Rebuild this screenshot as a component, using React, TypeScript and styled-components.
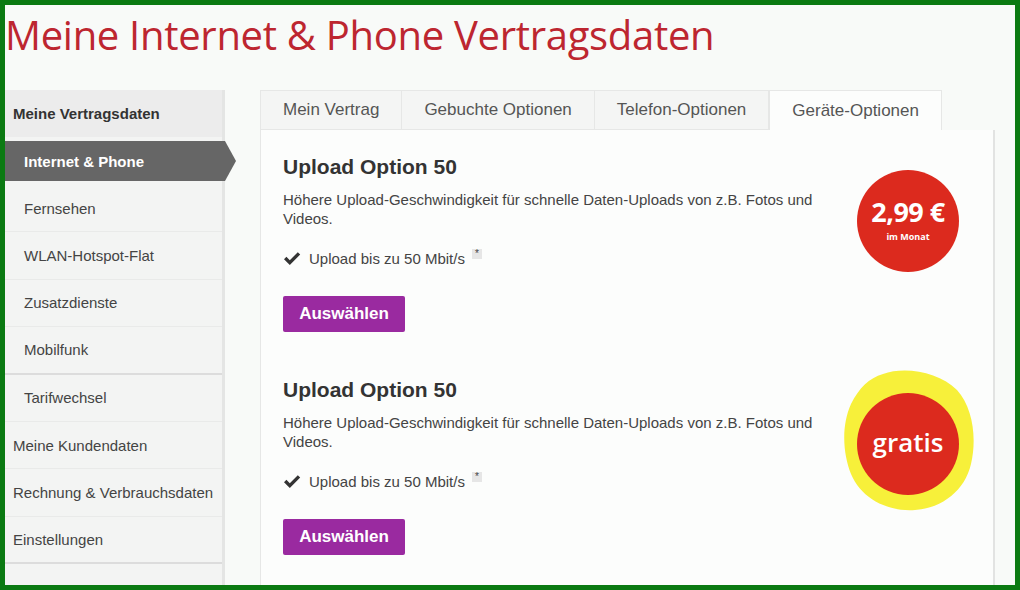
import React from 'react'
import styled, { createGlobalStyle } from 'styled-components'

const GlobalStyle = createGlobalStyle`
  html, body {
    margin: 0;
    padding: 0;
    background: #0b7a12;
  }
  * {
    box-sizing: border-box;
  }
`

const Frame = styled.div`
  width: 1020px;
  height: 590px;
  border: 5px solid #0b7a12;
  background: #f8faf8;
  font-family: 'Liberation Sans', Arial, sans-serif;
  color: #444;
  overflow: hidden;
`

const Title = styled.h1`
  margin: 0;
  height: 85px;
  padding: 5px 0 0 0;
  font-family: 'Open Sans', 'Noto Sans', sans-serif;
  font-weight: 400;
  font-size: 40px;
  line-height: 50px;
  letter-spacing: -0.3px;
  color: #bd2630;
  white-space: nowrap;
`

const Body = styled.div`
  display: flex;
  gap: 35px;
  height: 495px;
`

const Sidebar = styled.nav`
  width: 220px;
  flex: none;
  display: flex;
  flex-direction: column;
  background: #f3f4f3;
  border-right: 3px solid #e4e5e4;
`

const SideHeader = styled.div`
  height: 47px;
  display: flex;
  align-items: center;
  padding-left: 8px;
  background: #ececec;
  font-weight: 700;
  font-size: 15px;
  color: #333;
  margin-bottom: 4px;
`

const SideItem = styled.div<{ $sub?: boolean; $active?: boolean; $strong?: boolean }>`
  height: ${({ $active }) => ($active ? '40px' : '47.4px')};
  flex: none;
  display: flex;
  align-items: center;
  padding-left: ${({ $sub }) => ($sub ? '19px' : '8px')};
  font-size: 15px;
  color: #444;
  white-space: nowrap;
  border-bottom: ${({ $strong }) => ($strong ? '2px solid #dcdcdc' : '1px solid #e9eae9')};
  ${({ $active }) =>
    $active &&
    `
    width: calc(100% + 14px);
    background: #666666;
    color: #ffffff;
    font-weight: 700;
    border-bottom: none;
    clip-path: polygon(0 0, calc(100% - 11px) 0, 100% 50%, calc(100% - 11px) 100%, 0 100%);
    margin-bottom: 4px;
  `}
`

const Main = styled.div`
  width: 735px;
  display: flex;
  flex-direction: column;
`

const Tabs = styled.div`
  display: flex;
  height: 40px;
`

const Tab = styled.div<{ $active?: boolean }>`
  padding: 0 22px;
  display: flex;
  align-items: center;
  font-size: 17px;
  color: #555;
  background: ${({ $active }) => ($active ? '#fcfdfc' : '#f4f5f4')};
  border: 1px solid #e6e7e6;
  border-left: ${({ $active }) => ($active ? '1px solid #e6e7e6' : 'none')};
  border-bottom: ${({ $active }) => ($active ? 'none' : '1px solid #e6e7e6')};
  &:first-child {
    border-left: 1px solid #e6e7e6;
  }
`

const Panel = styled.div`
  flex: 1;
  background: #fcfdfc;
  border-left: 1px solid #e6e7e6;
  border-right: 2px solid #e2e3e2;
  display: flex;
  flex-direction: column;
`

const Option = styled.section`
  display: flex;
  height: 223px;
  padding: 25px 34px 20px 22px;
`

const OptionText = styled.div`
  flex: 1;
`

const OptionTitle = styled.h2`
  margin: 0;
  font-size: 21px;
  line-height: 24px;
  font-weight: 700;
  color: #333;
`

const Desc = styled.p`
  margin: 11px 0 0 0;
  width: 540px;
  font-size: 15px;
  line-height: 19px;
  color: #444;
`

const Feature = styled.div`
  margin-top: 20px;
  display: flex;
  align-items: center;
  gap: 8px;
  height: 20px;
  font-size: 15px;
  color: #444;
`

const Note = styled.span`
  display: inline-flex;
  align-items: center;
  justify-content: center;
  width: 10px;
  height: 10px;
  margin-left: -1px;
  margin-top: -8px;
  background: #e6e6e6;
  font-size: 10px;
  line-height: 10px;
  color: #444;
`

const Button = styled.button`
  margin-top: 28px;
  width: 122px;
  height: 36px;
  border: none;
  border-radius: 2px;
  background: #9a2aa0;
  color: #fff;
  font-family: 'Liberation Sans', Arial, sans-serif;
  font-weight: 700;
  font-size: 17px;
  cursor: pointer;
`

const BadgeSlot = styled.div`
  position: relative;
  flex: none;
  width: 102px;
  margin-top: 15px;
`

const Badge = styled.div`
  position: relative;
  width: 102px;
  height: 102px;
  border-radius: 50%;
  background: #dc2a1e;
  color: #fff;
  display: flex;
  flex-direction: column;
  align-items: center;
  justify-content: center;
  gap: 3px;
  font-family: 'Open Sans', 'Noto Sans', sans-serif;
  font-weight: 700;
`

const Price = styled.div`
  font-size: 27px;
  line-height: 32px;
  letter-spacing: -0.5px;
  margin-top: -4px;
`

const PerMonth = styled.div`
  font-size: 9px;
  line-height: 11px;
`

const Gratis = styled.div`
  font-size: 26px;
  line-height: 30px;
  font-weight: 600;
  margin-top: -4px;
`

const Highlight = styled.svg`
  position: absolute;
  left: -14px;
  top: -25px;
  width: 134px;
  height: 144px;
`

const CheckIcon = () => (
  <svg width="18" height="15" viewBox="0 0 18 15">
    <path d="M1 8.2 L3.4 5.8 L6.8 9.2 L14.8 1.2 L17.2 3.6 L6.8 14 Z" fill="#333" />
  </svg>
)

type OptionData = {
  title: string
  desc: string
  feature: string
  badge: 'price' | 'gratis'
}

const options: OptionData[] = [
  {
    title: 'Upload Option 50',
    desc: 'Höhere Upload-Geschwindigkeit für schnelle Daten-Uploads von z.B. Fotos und Videos.',
    feature: 'Upload bis zu 50 Mbit/s',
    badge: 'price',
  },
  {
    title: 'Upload Option 50',
    desc: 'Höhere Upload-Geschwindigkeit für schnelle Daten-Uploads von z.B. Fotos und Videos.',
    feature: 'Upload bis zu 50 Mbit/s',
    badge: 'gratis',
  },
]

const subItems = ['Fernsehen', 'WLAN-Hotspot-Flat', 'Zusatzdienste', 'Mobilfunk', 'Tarifwechsel']
const topItems = ['Meine Kundendaten', 'Rechnung & Verbrauchsdaten', 'Einstellungen']
const tabs = ['Mein Vertrag', 'Gebuchte Optionen', 'Telefon-Optionen', 'Geräte-Optionen']

const App: React.FC = () => {
  return (
    <>
      <GlobalStyle />
      <Frame>
        <Title>Meine Internet &amp; Phone Vertragsdaten</Title>
        <Body>
          <Sidebar>
            <SideHeader>Meine Vertragsdaten</SideHeader>
            <SideItem $sub $active>
              Internet &amp; Phone
            </SideItem>
            {subItems.map((s) => (
              <SideItem key={s} $sub $strong={s === 'Mobilfunk'}>
                {s}
              </SideItem>
            ))}
            {topItems.map((s) => (
              <SideItem key={s} $strong={s === 'Einstellungen'}>
                {s}
              </SideItem>
            ))}
          </Sidebar>
          <Main>
            <Tabs>
              {tabs.map((t, i) => (
                <Tab key={t} $active={i === 3}>
                  {t}
                </Tab>
              ))}
            </Tabs>
            <Panel>
              {options.map((o, i) => (
                <Option key={i}>
                  <OptionText>
                    <OptionTitle>{o.title}</OptionTitle>
                    <Desc>{o.desc}</Desc>
                    <Feature>
                      <CheckIcon />
                      <span>{o.feature}</span>
                      <Note>*</Note>
                    </Feature>
                    <Button>Auswählen</Button>
                  </OptionText>
                  <BadgeSlot>
                    {o.badge === 'gratis' && (
                      <Highlight viewBox="0 0 134 144">
                        <path
                          d="M40 6 C62 -2 96 4 114 22 C130 40 134 70 128 96 C122 122 100 140 72 142 C44 144 18 130 8 106 C0 86 -2 58 8 36 C16 20 26 10 40 6 Z"
                          fill="#f7f03a"
                        />
                      </Highlight>
                    )}
                    <Badge>
                      {o.badge === 'price' ? (
                        <>
                          <Price>2,99 €</Price>
                          <PerMonth>im Monat</PerMonth>
                        </>
                      ) : (
                        <Gratis>gratis</Gratis>
                      )}
                    </Badge>
                  </BadgeSlot>
                </Option>
              ))}
            </Panel>
          </Main>
        </Body>
      </Frame>
    </>
  )
}

export default App
